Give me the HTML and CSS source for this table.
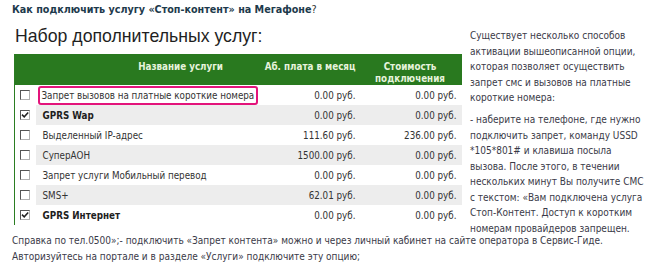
FILE: index.html
```html
<!DOCTYPE html>
<html lang="ru">
<head>
<meta charset="utf-8">
<link rel="stylesheet" href="styles.css">
</head>
<body>
<div class="title"><b>Как подключить услугу «Стоп-контент» на Мегафоне</b>?</div>
<div class="main">
  <div class="left">
    <h2 class="heading">Набор дополнительных услуг:</h2>
    <table class="services">
      <colgroup><col class="c1"><col class="c2"><col class="c3"><col class="c4"></colgroup>
      <thead>
        <tr>
          <th></th>
          <th class="h-name">Название услуги</th>
          <th class="h-price">Аб. плата в месяц</th>
          <th class="h-cost">Стоимость<br>подключения</th>
        </tr>
      </thead>
      <tbody>
        <tr><td class="cb"><span class="box"></span></td><td class="name"><span class="mark">Запрет вызовов на платные короткие номера</span></td><td class="num">0.00 руб.</td><td class="num2">0.00 руб.</td></tr>
        <tr class="alt"><td class="cb"><span class="box"><svg viewBox="0 0 8 8" width="8" height="8"><path d="M1 3.6 L3.2 5.8 L7.2 1.4" fill="none" stroke="#222" stroke-width="1.5"/></svg></span></td><td class="name"><b>GPRS Wap</b></td><td class="num">0.00 руб.</td><td class="num2">0.00 руб.</td></tr>
        <tr><td class="cb"><span class="box"></span></td><td class="name">Выделенный IP-адрес</td><td class="num">111.60 руб.</td><td class="num2">236.00 руб.</td></tr>
        <tr class="alt"><td class="cb"><span class="box"></span></td><td class="name">СуперАОН</td><td class="num">1500.00 руб.</td><td class="num2">0.00 руб.</td></tr>
        <tr><td class="cb"><span class="box"></span></td><td class="name">Запрет услуги Мобильный перевод</td><td class="num">0.00 руб.</td><td class="num2">0.00 руб.</td></tr>
        <tr class="alt"><td class="cb"><span class="box"></span></td><td class="name">SMS+</td><td class="num">62.01 руб.</td><td class="num2">0.00 руб.</td></tr>
        <tr><td class="cb"><span class="box"><svg viewBox="0 0 8 8" width="8" height="8"><path d="M1 3.6 L3.2 5.8 L7.2 1.4" fill="none" stroke="#222" stroke-width="1.5"/></svg></span></td><td class="name"><b>GPRS Интернет</b></td><td class="num">0.00 руб.</td><td class="num2">0.00 руб.</td></tr>
      </tbody>
    </table>
  </div>
  <div class="right">
    <p class="para">Существует несколько способов активации вышеописанной опции, которая позволяет осуществить запрет смс и вызовов на платные короткие номера:</p>
    <p class="para">- наберите на телефоне, где нужно подключить запрет, команду USSD *105*801# и клавиша посыла вызова. После этого, в течении нескольких минут Вы получите СМС с текстом: «Вам подключена услуга Стоп-Контент. Доступ к коротким номерам провайдеров запрещен.</p>
  </div>
</div>
<p class="bottom">Справка по тел.0500»;- подключить «Запрет контента» можно и через личный кабинет на сайте оператора в Сервис-Гиде. Авторизуйтесь на портале и в разделе «Услуги» подключите эту опцию;</p>
</body>
</html>
```
FILE: styles.css
```css
html, body {
  margin: 0;
  padding: 0;
  background: #fff;
}
body {
  font-family: "DejaVu Sans Condensed", "DejaVu Sans", sans-serif;
  color: #3a3a48;
  font-size: 10px;
}
.title {
  padding: 3px 0 0 12px;
  height: 23px;
  box-sizing: border-box;
  color: #333;
  font-size: 10.7px;
  line-height: 14px;
}
.title b {
  font-weight: bold;
  color: #1d3a4c;
}
.main {
  display: flex;
  align-items: flex-start;
}
.left {
  flex: 0 0 447px;
  margin-left: 14px;
}
.heading {
  margin: 2px 0 7px 1px;
  font-family: "Liberation Sans", Arial, sans-serif;
  font-weight: normal;
  font-size: 17.7px;
  line-height: 22px;
  color: #1f1f1f;
}
.services {
  border-collapse: collapse;
  width: 447px;
  table-layout: fixed;
  font-size: 9.75px;
  border-left: 1px solid #2b7d22;
}
.c1 { width: 21px; }
.c2 { width: 201px; }
.c3 { width: 122px; }
.c4 { width: 103px; }
.services thead tr {
  background: #29791f;
  height: 31px;
}
.services th {
  color: #e6f3dc;
  font-weight: bold;
  font-size: 9.75px;
  line-height: 12px;
  padding: 7px 0 0;
  vertical-align: top;
  white-space: nowrap;
}
.services th.h-name { text-align: right; padding-right: 13px; }
.services th.h-price { text-align: right; padding-right: 3px; }
.services th.h-cost { text-align: center; }
.services tbody tr { height: 20px; }
.services td {
  padding: 0;
  line-height: 13px;
  white-space: nowrap;
  vertical-align: middle;
  color: #333;
}
.services tr.alt td { background: #ededed; }
.services tr.alt td.cb { background: #fff; }
.services td.cb { padding-left: 5px; }
.box {
  display: block;
  width: 8px;
  height: 8px;
  border: 1px solid #555;
  border-right-color: #b0b0b0;
  border-bottom-color: #b0b0b0;
  background: #fff;
}
.box svg { display: block; }
.services td.name { padding-left: 7px; }
.name b { color: #1e1e1e; }
.mark {
  display: inline-block;
  margin-left: -5px;
  padding: 1px 2px 1px 2px;
  border: 2px solid #e3147b;
  border-radius: 3px;
  background: #fff;
}
.services td.num { text-align: right; padding-right: 3px; }
.services td.num2 { text-align: right; padding-right: 5px; }
.right {
  flex: 0 0 177px;
  margin-left: 8px;
  padding-top: 5px;
}
.para {
  margin: 0 0 6.5px;
  line-height: 15.5px;
}
.para:last-child { margin-bottom: 0; }
.bottom {
  margin: -3px 0 0;
  padding: 0 0 0 12px;
  line-height: 16px;
}
```
